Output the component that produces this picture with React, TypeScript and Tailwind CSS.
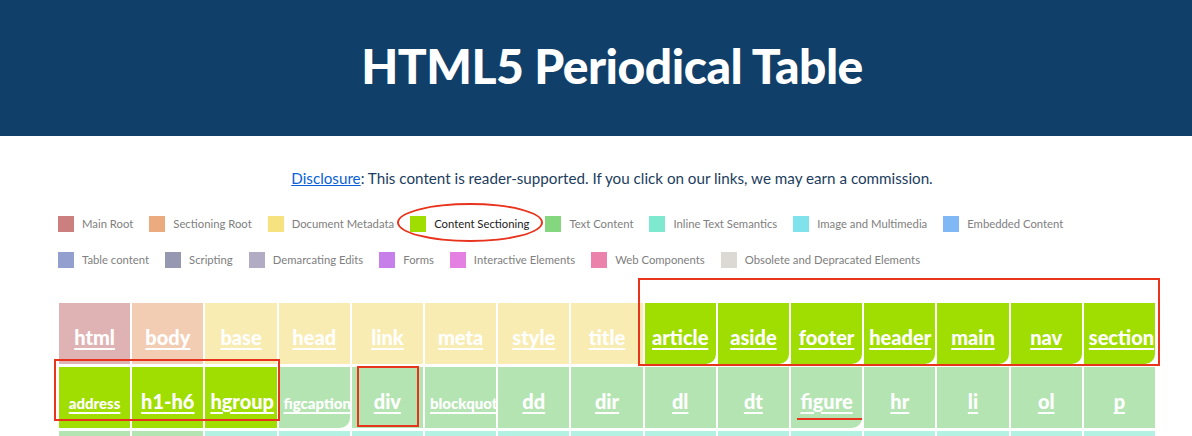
import React from 'react';

type Cell = { name: string; bg: string; round?: boolean; small?: boolean };

const legendRows = [
    [
        { label: 'Main Root', color: 'bg-[#cc7f7f]' },
        { label: 'Sectioning Root', color: 'bg-[#ebab7f]' },
        { label: 'Document Metadata', color: 'bg-[#f6e27f]' },
        { label: 'Content Sectioning', color: 'bg-[#a0dd00]', active: true },
        { label: 'Text Content', color: 'bg-[#84d67f]' },
        { label: 'Inline Text Semantics', color: 'bg-[#7fe9cf]' },
        { label: 'Image and Multimedia', color: 'bg-[#80e3eb]' },
        { label: 'Embedded Content', color: 'bg-[#80b8f6]' },
    ],
    [
        { label: 'Table content', color: 'bg-[#939fcf]' },
        { label: 'Scripting', color: 'bg-[#9698b2]' },
        { label: 'Demarcating Edits', color: 'bg-[#b1abc3]' },
        { label: 'Forms', color: 'bg-[#c780ea]' },
        { label: 'Interactive Elements', color: 'bg-[#e380e1]' },
        { label: 'Web Components', color: 'bg-[#eb82ab]' },
        { label: 'Obsolete and Depracated Elements', color: 'bg-[#dcd8d3]' },
    ],
];

const root = 'bg-[#dfb3b3]';
const secRoot = 'bg-[#f2cdb3]';
const meta = 'bg-[#f9ecb3]';
const section = 'bg-[#a0dd00]';
const text = 'bg-[#b5e4b3]';
const inline = 'bg-[#b3f2e2]';

const cells: Cell[] = [
    { name: 'html', bg: root },
    { name: 'body', bg: secRoot },
    { name: 'base', bg: meta },
    { name: 'head', bg: meta },
    { name: 'link', bg: meta },
    { name: 'meta', bg: meta },
    { name: 'style', bg: meta },
    { name: 'title', bg: meta },
    { name: 'article', bg: section, round: true },
    { name: 'aside', bg: section, round: true },
    { name: 'footer', bg: section, round: true },
    { name: 'header', bg: section, round: true },
    { name: 'main', bg: section, round: true },
    { name: 'nav', bg: section, round: true },
    { name: 'section', bg: section, round: true },
    { name: 'address', bg: section, small: true },
    { name: 'h1-h6', bg: section },
    { name: 'hgroup', bg: section },
    { name: 'figcaption', bg: text, round: true, small: true },
    { name: 'div', bg: text },
    { name: 'blockquote', bg: text, small: true },
    { name: 'dd', bg: text },
    { name: 'dir', bg: text },
    { name: 'dl', bg: text },
    { name: 'dt', bg: text },
    { name: 'figure', bg: text, round: true },
    { name: 'hr', bg: text },
    { name: 'li', bg: text },
    { name: 'ol', bg: text },
    { name: 'p', bg: text },
    { name: 'pre', bg: text },
    { name: 'ul', bg: text },
    { name: 'a', bg: inline },
    { name: 'abbr', bg: inline },
    { name: 'b', bg: inline },
    { name: 'bdi', bg: inline },
    { name: 'bdo', bg: inline },
    { name: 'br', bg: inline },
    { name: 'cite', bg: inline },
    { name: 'code', bg: inline },
    { name: 'data', bg: inline },
    { name: 'dfn', bg: inline },
    { name: 'em', bg: inline },
    { name: 'i', bg: inline },
    { name: 'kbd', bg: inline },
];

const App: React.FC = () => {
    return (
        <div className="relative w-[1192px] h-[436px] overflow-hidden bg-white font-['Lato',sans-serif]">
            {/* Header */}
            <header className="h-[136px] bg-[#10406a] flex items-center justify-center pl-8">
                <h1 className="text-white text-[48px] font-black tracking-[-0.5px] leading-none pb-1">
                    HTML5 Periodical Table
                </h1>
            </header>

            {/* Disclosure */}
            <p className="mt-[31px] pl-8 text-center text-[15.2px] text-[#1c3d5e] leading-[22px]">
                <a href="#" className="text-[#0a5fd6] underline">Disclosure</a>: This content is reader-supported. If you click on our links, we may earn a commission.
            </p>

            {/* Legend */}
            <div className="mt-[27px] ml-[58px] flex flex-col gap-[20px]">
                {legendRows.map((row, i) => (
                    <div key={i} className="flex items-center gap-4">
                        {row.map((item) => (
                            <div key={item.label} className="flex items-center gap-2">
                                <span className={`w-4 h-4 ${item.color}`} />
                                <span className={`text-[11.3px] leading-4 ${item.active ? 'text-[#222]' : 'text-[#808080]'}`}>
                                    {item.label}
                                </span>
                            </div>
                        ))}
                    </div>
                ))}
            </div>

            {/* Table */}
            <div className="mt-[35px] ml-[59px] w-[1096px] grid grid-cols-15 gap-x-[2px] gap-y-[3px] auto-rows-[61px]">
                {cells.map((c) => (
                    <div
                        key={c.name}
                        className={`${c.bg} ${c.round ? 'rounded-br-[10px]' : ''} overflow-hidden px-[5px] pt-[22px] text-center whitespace-nowrap text-[20px] leading-[24px]`}
                    >
                        <a
                            href="#"
                            className={`text-white font-black underline decoration-2 underline-offset-[3px] ${c.small ? 'text-[15px]' : ''}`}
                        >
                            {c.name}
                        </a>
                    </div>
                ))}
            </div>

            {/* Annotations */}
            <div className="absolute left-[397px] top-[203px] w-[146px] h-[39px] rounded-[50%] border-2 border-[#e8331d]" />
            <div className="absolute left-[638px] top-[278px] w-[522px] h-[88px] border-2 border-[#e8331d]" />
            <div className="absolute left-[54px] top-[359px] w-[226px] h-[62px] border-2 border-[#e8331d]" />
            <div className="absolute left-[357px] top-[366px] w-[62px] h-[61px] border-2 border-[#e8331d]" />
            <div className="absolute left-[797px] top-[418px] w-[65px] h-[2px] bg-[#e8331d]" />
        </div>
    );
};

export default App;
